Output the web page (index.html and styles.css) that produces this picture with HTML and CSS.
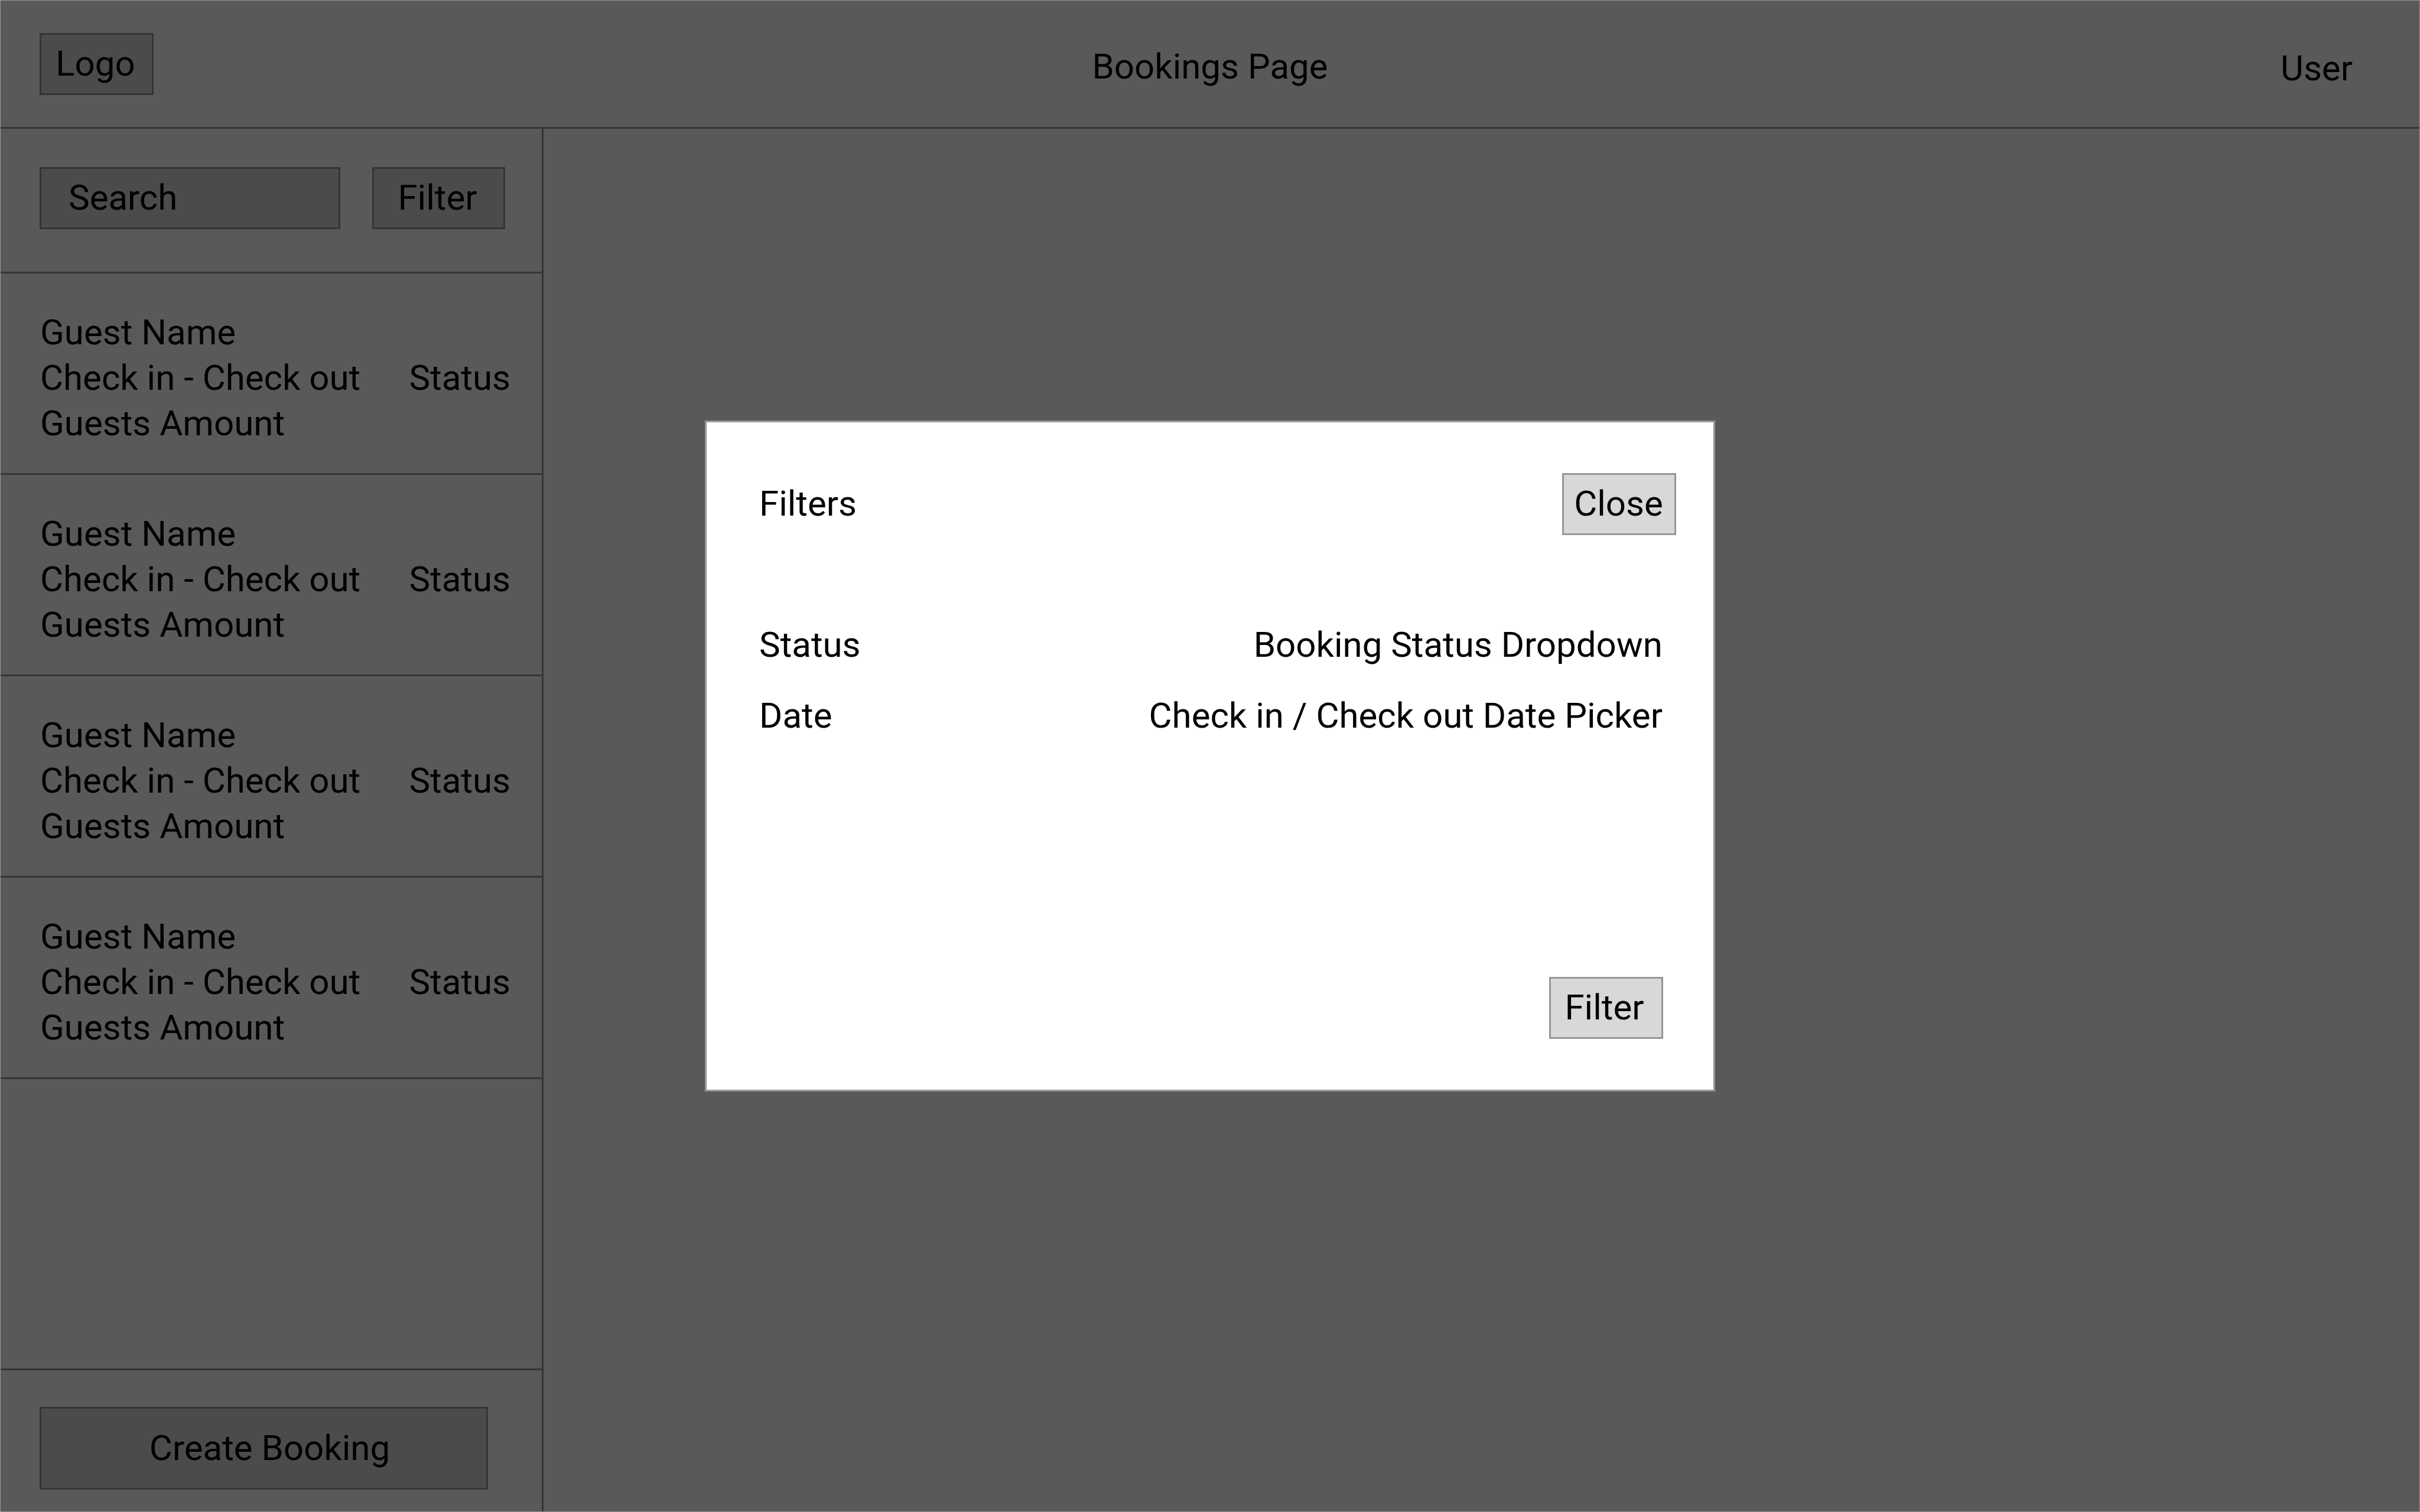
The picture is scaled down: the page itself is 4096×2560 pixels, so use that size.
FILE: index.html
```html
<!DOCTYPE html>
<html lang="en">
<head>
  <meta charset="utf-8">
  <title>Bookings Page</title>
  <link rel="stylesheet" href="styles.css">
</head>
<body>
  <div class="page">
    <header class="topbar">
      <a class="box logo" href="#">Logo</a>
      <h1 class="title">Bookings Page</h1>
      <a class="user" href="#">User</a>
    </header>
    <div class="content">
      <aside class="sidebar">
        <form class="toolbar">
          <input class="box search" type="text" placeholder="Search" aria-label="Search">
          <button class="box filter-toggle" type="button">Filter</button>
        </form>
        <ul class="bookings">
          <li class="booking">
            <div class="details"><div>Guest Name</div><div>Check in - Check out</div><div>Guests Amount</div></div>
            <div>Status</div>
          </li>
          <li class="booking">
            <div class="details"><div>Guest Name</div><div>Check in - Check out</div><div>Guests Amount</div></div>
            <div>Status</div>
          </li>
          <li class="booking">
            <div class="details"><div>Guest Name</div><div>Check in - Check out</div><div>Guests Amount</div></div>
            <div>Status</div>
          </li>
          <li class="booking">
            <div class="details"><div>Guest Name</div><div>Check in - Check out</div><div>Guests Amount</div></div>
            <div>Status</div>
          </li>
        </ul>
        <div class="sidebar-footer">
          <button class="box create" type="button">Create Booking</button>
        </div>
      </aside>
      <main class="main"></main>
    </div>
  </div>

  <div class="overlay">
    <form class="modal" role="dialog" aria-labelledby="filters-title">
      <div class="modal-header">
        <h2 class="modal-title" id="filters-title">Filters</h2>
        <button class="box close" type="button">Close</button>
      </div>
      <div class="fields">
        <div class="field">
          <label for="status">Status</label>
          <select class="control" id="status">
            <option>Booking Status Dropdown</option>
          </select>
        </div>
        <div class="field">
          <label for="date">Date</label>
          <input class="control" id="date" type="text" placeholder="Check in / Check out Date Picker">
        </div>
      </div>
      <div class="modal-footer">
        <button class="box apply" type="button">Filter</button>
      </div>
    </form>
  </div>
</body>
</html>
```
FILE: styles.css
```css
:root {
  --line: #979797;
  --fill: #d8d8d8;
}

* {
  box-sizing: border-box;
}

body {
  margin: 0;
  background: #fff;
  color: #000;
  font: 400 60px/77px Roboto, "Liberation Sans", sans-serif;
}

h1,
h2 {
  margin: 0;
  font: inherit;
}

a {
  color: inherit;
  text-decoration: none;
}

button,
input,
select {
  margin: 0;
  font: inherit;
  color: inherit;
  border-radius: 0;
}

input::placeholder {
  color: inherit;
  opacity: 1;
}

/* Shared outlined box: buttons, logo and search */
.box {
  min-width: 193px;
  padding: 10px 0 12px;
  border: 3px solid var(--line);
  background: var(--fill);
  text-align: center;
}

.page {
  display: flex;
  flex-direction: column;
  min-height: 100vh;
}

/* Top bar */
.topbar {
  display: grid;
  grid-template-columns: 1fr auto 1fr;
  align-items: center;
  padding: 56px 114px 54px 67px;
  border-bottom: 3px solid var(--line);
}

.logo {
  justify-self: start;
  padding-right: 4px;
}

.title {
  padding: 8px 0 0 47px;
}

.user {
  justify-self: end;
  padding-top: 14px;
}

.content {
  display: flex;
  flex: 1;
}

.main {
  flex: 1;
}

/* Sidebar */
.sidebar {
  display: flex;
  flex: 0 0 920px;
  flex-direction: column;
  min-width: 0;
  border-right: 3px solid var(--line);
}

.toolbar {
  display: flex;
  gap: 54px;
  padding: 65px 62px 72px 67px;
  border-bottom: 3px solid var(--line);
}

.search {
  flex: 1;
  min-width: 0;
  padding-left: 46px;
  text-align: left;
}

.filter-toggle {
  flex: 0 0 225px;
  padding-right: 4px;
}

.bookings {
  margin: 0;
  padding: 0;
  list-style: none;
}

.booking {
  display: flex;
  align-items: center;
  justify-content: space-between;
  padding: 61px 53px 46px 68px;
  border-bottom: 3px solid var(--line);
}

.sidebar-footer {
  margin-top: auto;
  padding: 62px 91px 38px 67px;
  border-top: 3px solid var(--line);
}

.create {
  display: block;
  width: 100%;
  padding: 28px 0 29px 20px;
}

/* Filters dialog */
.overlay {
  position: fixed;
  inset: 0;
  display: flex;
  align-items: center;
  justify-content: center;
  border: 1px solid var(--line);
  background: rgba(0, 0, 0, 0.65);
}

.modal {
  width: 1710px;
  max-width: 100%;
  padding: 86px 85px 86px 89px;
  border: 3px solid var(--line);
  background: #fff;
}

.modal-header {
  display: flex;
  align-items: center;
  justify-content: space-between;
  margin-right: -22px;
}

.modal-title {
  padding-bottom: 2px;
}

.close {
  padding-right: 2px;
}

.fields {
  display: grid;
  gap: 43px;
  margin: 147px 0 404px;
}

.field {
  display: flex;
  justify-content: space-between;
}

.control {
  flex: 0 1 1000px;
  min-width: 0;
  height: 77px;
  padding: 0 1px 0 0;
  border: 0;
  background: none;
  appearance: none;
  text-align: right;
  text-align-last: right;
}

.modal-footer {
  display: flex;
  justify-content: flex-end;
}

.apply {
  padding-right: 6px;
}
```
